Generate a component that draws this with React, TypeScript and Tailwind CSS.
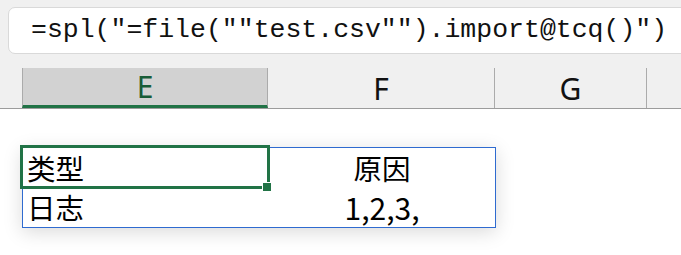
import React from "react";

export default function App() {
  return (
    <div className="w-[681px] h-[255px] overflow-hidden bg-white relative">
      {/* top chrome */}
      <div className="bg-[#f0f0f0] pt-[7px]">
        <div className="ml-[8px] h-[47px] w-[700px] bg-white border border-[#d9d9d9] rounded-[7px] flex items-center pl-[22px]">
          <span className="text-[26.5px] leading-none text-[#111] whitespace-pre" style={{ fontFamily: '"Liberation Mono", "DejaVu Sans Mono", monospace' }}>
            =spl("=file(""test.csv"").import@tcq()")
          </span>
        </div>
        <div className="mt-[14px] flex h-[41px] border-b border-[#9c9c9c]" style={{ fontFamily: '"Noto Sans", "Open Sans", sans-serif' }}>
          <div className="w-[22px]" />
          <div className="w-[246px] bg-[#d2d2d2] border-x border-[#ababab] border-b-[3px] border-b-[#217346] flex items-center justify-center text-[30px] text-[#185c37]">
            E
          </div>
          <div className="w-[227px] border-r border-[#ababab] flex items-center justify-center text-[30px] text-[#111]">
            F
          </div>
          <div className="w-[152px] border-r border-[#ababab] flex items-center justify-center text-[30px] text-[#111]">
            G
          </div>
          <div className="flex-1" />
        </div>
      </div>

      {/* grid area */}
      <div className="pt-[38px] pl-[22px]" style={{ fontFamily: '"Noto Sans CJK SC", "Noto Sans", sans-serif' }}>
        <div className="relative w-[474px] border border-[#2f6bd0] shadow-[0_4px_18px_rgba(0,0,0,0.15)] bg-white">
          <div className="flex h-[40px] items-center">
            <div className="w-[246px] pl-[4px] text-[28.5px] text-black">类型</div>
            <div className="flex-1 text-center text-[28.5px] text-black">原因</div>
          </div>
          <div className="flex h-[39px] items-center">
            <div className="w-[246px] pl-[4px] text-[28.5px] text-black">日志</div>
            <div className="flex-1 text-center text-[30px] text-black">1,2,3,</div>
          </div>
          {/* selection */}
          <div className="absolute left-[-3px] top-[-3px] w-[250px] h-[44px] border-[3px] border-[#217346]" />
          <div className="absolute left-[239px] top-[34px] w-[10px] h-[10px] bg-[#217346] border border-white" />
        </div>
      </div>
    </div>
  );
}
